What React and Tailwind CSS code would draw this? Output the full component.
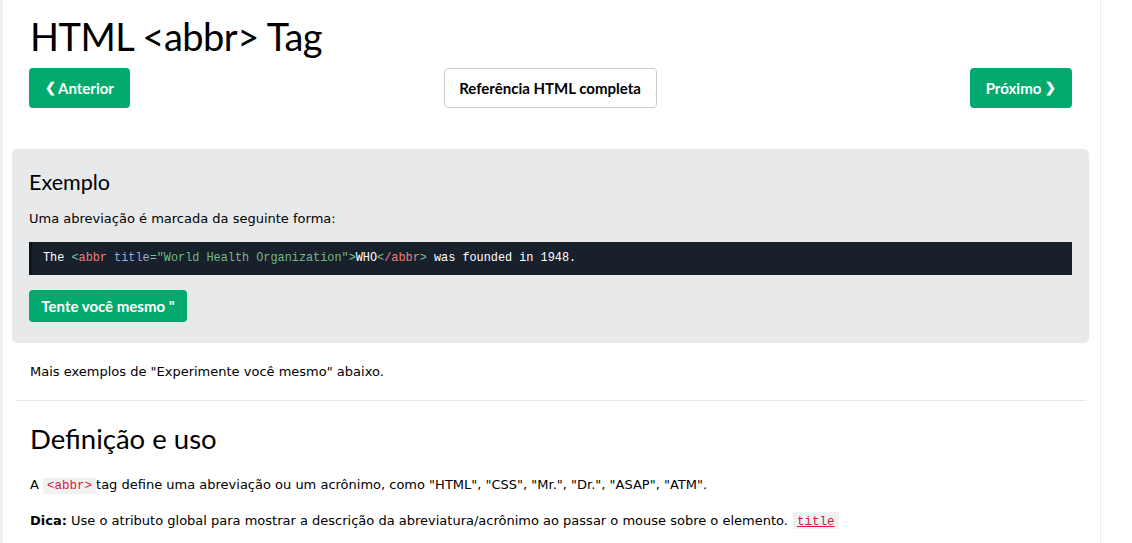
export default function App() {
  const seg = { fontFamily: 'Lato, "Noto Sans", sans-serif' };
  const ver = { fontFamily: '"DejaVu Sans", Verdana, sans-serif' };
  const btn = { fontFamily: 'Lato, "Open Sans", sans-serif' };
  const mono = { fontFamily: '"Liberation Mono", "DejaVu Sans Mono", monospace' };
  return (
    <div className="flex w-[1132px] h-[543px] overflow-hidden bg-white text-black">
      <div className="w-[3px] shrink-0 bg-[#f1f1f1]" />
      <div className="w-[1098px] shrink-0 border-r border-[#ececec] pl-[9px] pr-[11px]">
        <h1 className="pl-[18px] pt-[12px] text-[38px] leading-[48px] tracking-[-0.5px] font-normal" style={seg}>
          HTML &lt;abbr&gt; Tag
        </h1>
        <div className="flex items-center justify-between pl-[17px] pr-[17px] mt-[8px]" style={btn}>
          <div className="h-[40px] w-[101px] rounded-[4px] bg-[#04aa6d] text-white font-bold text-[15px] flex items-center justify-center">
            <span className="mr-[2px] text-[13px]">❮</span>Anterior
          </div>
          <div className="h-[40px] w-[213px] rounded-[4px] border border-[#cccccc] text-black font-bold text-[15px] flex items-center justify-center">
            Referência HTML completa
          </div>
          <div className="h-[40px] w-[102px] rounded-[4px] bg-[#04aa6d] text-white font-bold text-[15px] flex items-center justify-center">
            Próximo<span className="ml-[4px] text-[13px]">❯</span>
          </div>
        </div>
        <div className="mt-[41px] bg-[#e7e9eb] rounded-[5px] pl-[17px] pr-[17px] pt-[18px] pb-[21px]">
          <h2 className="text-[21.5px] leading-[30px] font-normal" style={seg}>Exemplo</h2>
          <p className="mt-[12px] text-[13px] leading-[20px]" style={ver}>Uma abreviação é marcada da seguinte forma:</p>
          <div className="mt-[13px] h-[33px] bg-[#17202b] border-l-[3px] border-[#0f151c] pl-[11px] flex items-center text-[11.85px] whitespace-pre" style={mono}>
            <span className="text-white">The </span>
            <span className="text-[#72c8a0]">&lt;</span><span className="text-[#f47c7c]">abbr</span><span className="text-[#9aa8d8]"> title</span><span className="text-[#72c8a0]">=</span><span className="text-[#73b888]">"World Health Organization"</span><span className="text-[#72c8a0]">&gt;</span>
            <span className="text-white">WHO</span>
            <span className="text-[#72c8a0]">&lt;</span><span className="text-[#f47c7c]">/abbr</span><span className="text-[#72c8a0]">&gt;</span>
            <span className="text-white"> was founded in 1948.</span>
          </div>
          <div className="mt-[15px] h-[32px] w-[158px] rounded-[4px] bg-[#04aa6d] text-white font-bold text-[15px] flex items-center justify-center" style={btn}>
            Tente você mesmo "
          </div>
        </div>
        <p className="pl-[18px] mt-[19px] text-[13px] leading-[20px]" style={ver}>
          Mais exemplos de "Experimente você mesmo" abaixo.
        </p>
        <div className="ml-[4px] mr-[3px] mt-[18px] border-t border-[#e8e8e8]" />
        <h2 className="pl-[18px] mt-[19px] text-[27.5px] leading-[38px] font-normal" style={seg}>Definição e uso</h2>
        <p className="pl-[18px] mt-[17px] text-[13px] leading-[20px]" style={ver}>
          A <span className="bg-[#f1f1f1] text-[#dc143c] px-[4px] py-[1px] text-[12.5px]" style={mono}>&lt;abbr&gt;</span>tag define uma abreviação ou um acrônimo, como "HTML", "CSS", "Mr.", "Dr.", "ASAP", "ATM".
        </p>
        <p className="pl-[18px] mt-[15px] text-[13px] leading-[20px]" style={ver}>
          <b>Dica:</b> Use o atributo global para mostrar a descrição da abreviatura/acrônimo ao passar o mouse sobre o elemento. <span className="bg-[#f1f1f1] px-[4px] py-[1px] ml-[1px]"><span className="text-[#dc143c] underline text-[12.5px]" style={mono}>title</span></span>
        </p>
      </div>
    </div>
  );
}
